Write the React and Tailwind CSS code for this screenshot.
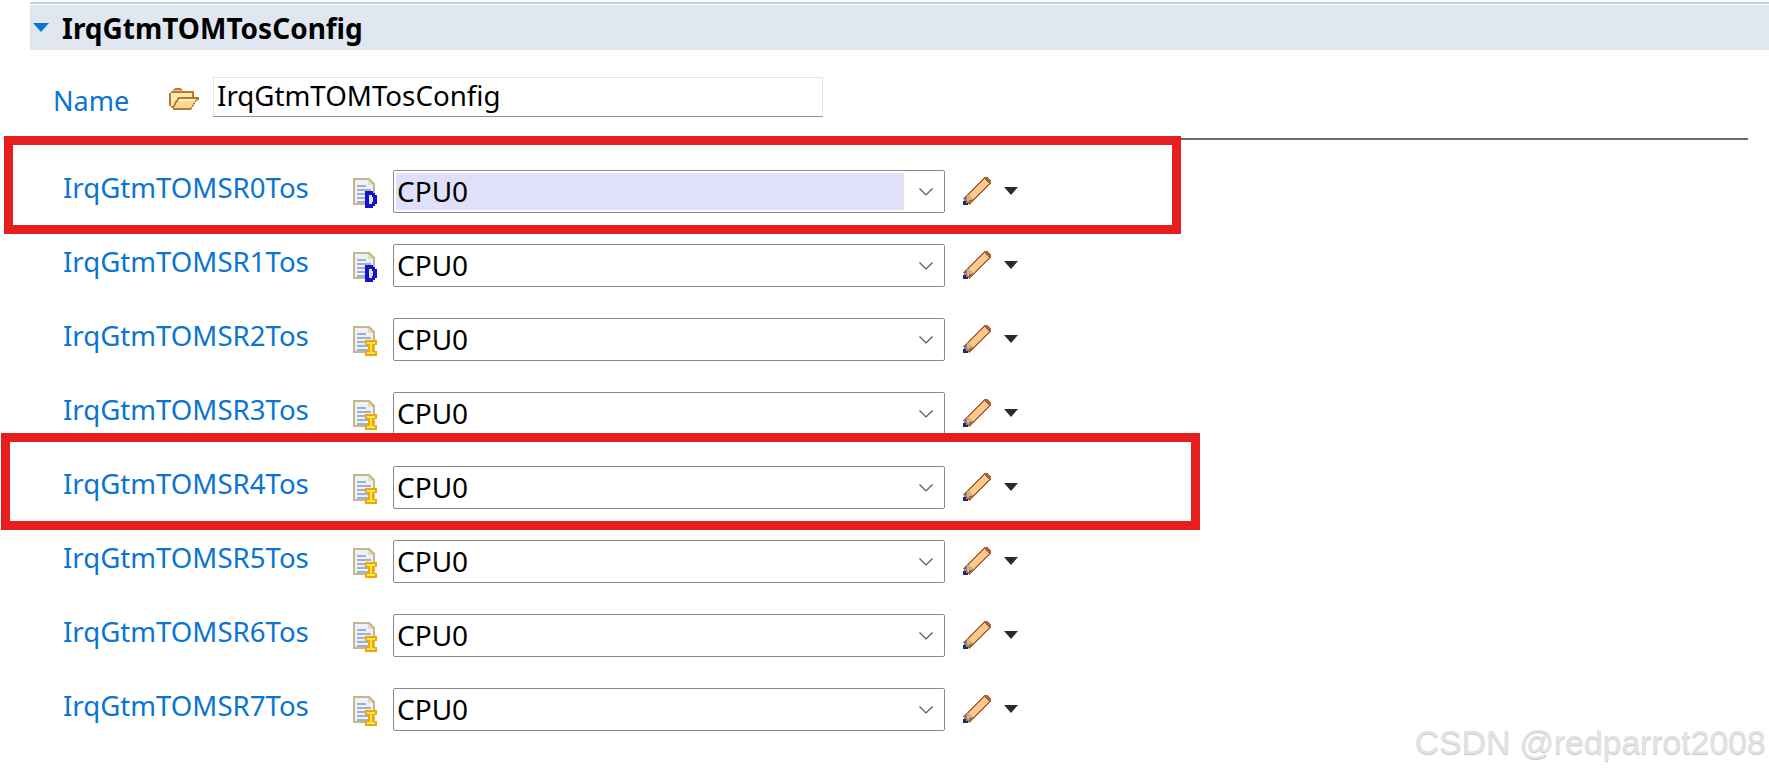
import React from "react";

const rows = [
  { name: "IrqGtmTOMSR0Tos", badge: "D", selected: true },
  { name: "IrqGtmTOMSR1Tos", badge: "D" },
  { name: "IrqGtmTOMSR2Tos", badge: "I" },
  { name: "IrqGtmTOMSR3Tos", badge: "I" },
  { name: "IrqGtmTOMSR4Tos", badge: "I" },
  { name: "IrqGtmTOMSR5Tos", badge: "I" },
  { name: "IrqGtmTOMSR6Tos", badge: "I" },
  { name: "IrqGtmTOMSR7Tos", badge: "I" },
];

const FolderIcon = () => (
  <svg width="30" height="22" viewBox="0 0 30 22" shapeRendering="crispEdges" className="shrink-0">
    <path d="M2 3h2V1h2V0h6v1h1v2h12v6h5v3h-2l-6 10H4v-2H2v-2H0V5h2z" fill="#b87a30" />
    <path d="M4 2h8v1H4z" fill="#e8c98a" />
    <path d="M2 5h21v4H9L4 18H2z" fill="#fbe6ae" />
    <path d="M10 11h17l-5 9H5z" fill="#f9d98f" />
    <path d="M10 11h17l-1 2H9z" fill="#fdeec6" />
  </svg>
);

const DocIcon = ({ badge }) => (
  <svg width="26" height="30" viewBox="0 0 26 30" shapeRendering="crispEdges" className="shrink-0">
    <path d="M0 0h16l6 6v21H0z" fill="#c5b78c" />
    <path d="M2 2h13v5h5v18H2z" fill="#eef1f8" />
    <path d="M15 2l5 5h-5z" fill="#e9dcae" />
    <path d="M4 7h9v2H4zM4 11h14v2H4zM4 15h14v2H4zM4 19h14v2H4zM4 23h14v2H4z" fill="#9fafd0" />
    {badge === "D" ? (
      <>
        <path d="M12 13h8v2h2v2h2v9h-2v2h-2v2h-8z" fill="#1414c8" />
        <path d="M16 17h3v2h1v5h-1v2h-3z" fill="#dfe2f6" />
      </>
    ) : (
      <>
        <path d="M12 14h12v5h-3v6h3v5H12v-5h3v-6h-3z" fill="#f5a400" />
        <path d="M14 16h8v2h-3v8h3v2h-8v-2h3v-8h-3z" fill="#ffe84a" />
      </>
    )}
  </svg>
);

const PencilIcon = () => (
  <svg width="28" height="28" viewBox="0 0 28 28" shapeRendering="crispEdges" className="shrink-0">
    <path d="M6.5 21.5 23 5" stroke="#a8643a" strokeWidth="9" strokeLinecap="square" fill="none" />
    <path d="M7.5 20.5 23.5 4.5" stroke="#fbc98c" strokeWidth="6" fill="none" />
    <path d="M4 18h3v2h2v3H6v2H2v-3h2z" fill="#c9b684" />
    <path d="M1 22h2v-2h1v4H1z" fill="#8f7a9a" />
    <path d="M0 24h5v4H0z" fill="#0d2f80" />
    <path d="M3 24h2v2H3z" fill="#d07a2a" />
  </svg>
);

const FormRow = ({ name, badge, selected }) => (
  <div className="flex items-start h-[74px]">
    <a className="w-[290px] ml-[63px] mt-[-2px] text-[#0a74d2] text-[27.6px] leading-[38px]">{name}</a>
    <div className="mt-[8px]">
      <DocIcon badge={badge} />
    </div>
    <div className="ml-[14px] flex h-[43px] w-[552px] items-center justify-between rounded-[2px] border border-[#8a8a8a] bg-white pl-[2px] pr-[10px]">
      <div className={`h-[37px] w-[508px] pl-[1px] text-[28px] leading-[36px] text-black ${selected ? "bg-[#e0e0fb]" : ""}`}>CPU0</div>
      <svg width="16" height="10" viewBox="0 0 16 10" className="mt-[1px] shrink-0">
        <path d="M1.5 1.5 8 8l6.5-6.5" fill="none" stroke="#555" strokeWidth="1.2" />
      </svg>
    </div>
    <div className="ml-[18px] mt-[7px]">
      <PencilIcon />
    </div>
    <svg width="14" height="8" viewBox="0 0 14 8" className="ml-[13px] mt-[17px] shrink-0">
      <path d="M0 0h14L7 8z" fill="#2b2b2b" />
    </svg>
  </div>
);

export default function App() {
  return (
    <div className="relative h-[771px] w-full overflow-hidden bg-white font-['Noto_Sans','Open_Sans',sans-serif]">
      <div className="ml-[30px] mt-[2px] border-t-2 border-[#c2d3e8] pt-[1px]">
        <div className="flex h-[45px] items-center bg-[#e0e7f1] pl-[3px]">
          <svg width="16" height="9" viewBox="0 0 16 9" className="shrink-0">
            <path d="M0 0h16L8 9z" fill="#0a74d2" />
          </svg>
          <h2 className="ml-[13px] text-[28px] font-bold leading-[38px] text-black">IrqGtmTOMTosConfig</h2>
        </div>
      </div>

      <div className="mt-[27px] flex h-[40px] items-start">
        <a className="ml-[53px] mt-[5px] w-[116px] text-[27px] leading-[38px] text-[#0a74d2]">Name</a>
        <div className="mt-[11px]">
          <FolderIcon />
        </div>
        <div className="ml-[14px] h-[40px] w-[610px] border border-[#e6e6e6] border-b-[#8e8e8e] bg-white pl-[3px] text-[27.7px] leading-[35px] text-black">
          IrqGtmTOMTosConfig
        </div>
      </div>

      <div className="ml-[30px] mr-[21px] mt-[21px] h-[2px] bg-[#6b6b6b]" />

      <div className="mt-[30px]">
        {rows.map((row) => (
          <FormRow key={row.name} {...row} />
        ))}
      </div>

      <div className="absolute left-[4px] top-[136px] h-[98px] w-[1177px] border-[9px] border-[#e61e1e]" />
      <div className="absolute left-[1px] top-[433px] h-[97px] w-[1199px] border-[9px] border-[#e61e1e]" />

      <div className="absolute left-[1415px] top-[722px] whitespace-nowrap font-['Liberation_Sans',sans-serif] text-[33.7px] leading-[40px] text-[#e2e2e2] [text-shadow:0_1px_1px_#c4c4c4]">
        CSDN @redparrot2008
      </div>
    </div>
  );
}
